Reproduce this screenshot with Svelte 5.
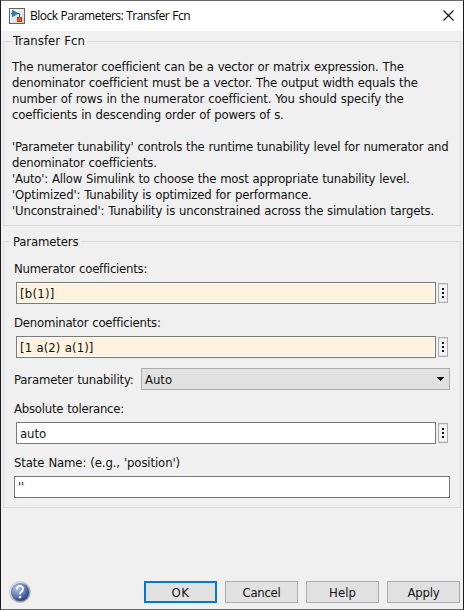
<script>
  // Spread a line of text evenly so that it spans the given width.
  function fit(node, width) {
    const natural = node.getBoundingClientRect().width;
    const count = [...node.textContent].length;
    node.style.letterSpacing = (width - natural) / count + 'px';
  }

  const description = [
    ['The numerator coefficient can be a vector or matrix expression. The', 391.5],
    ['denominator coefficient must be a vector. The output width equals the', 405.5],
    ['number of rows in the numerator coefficient. You should specify the', 391.5],
    ['coefficients in descending order of powers of s.', 271.5],
    ['', 0],
    ["'Parameter tunability' controls the runtime tunability level for numerator and", 436.5],
    ['denominator coefficients.', 144.5],
    ["'Auto': Allow Simulink to choose the most appropriate tunability level.", 397.5],
    ["'Optimized': Tunability is optimized for performance.", 299.5],
    ["'Unconstrained': Tunability is unconstrained across the simulation targets.", 422]
  ];

  const buttons = [
    ['OK', 18],
    ['Cancel', 38],
    ['Help', 27],
    ['Apply', 32]
  ];
</script>

{#snippet more()}
  <button class="more" aria-label="More options"><i></i><i></i><i></i></button>
{/snippet}

<div class="window">
  <header>
    <svg class="app" width="16" height="16" viewBox="0 0 16 16">
      <defs>
        <linearGradient id="tile" x1="0" y1="0" x2="1" y2="1">
          <stop offset="0" stop-color="#fff" /><stop offset="1" stop-color="#cfcfcf" />
        </linearGradient>
      </defs>
      <rect x=".5" y=".5" width="15" height="15" fill="url(#tile)" stroke="#626262" />
      <path d="M2 5.5h2M8 5.5h2.5v4" fill="none" stroke="#555" />
      <path d="M3.3 2.2v6.6L9 5.5z" fill="#2387bd" stroke="#17638f" stroke-width=".7" />
      <rect x="8.5" y="9.5" width="4" height="4" fill="#e9632b" stroke="#a93b12" />
    </svg>
    <span class="title"><span use:fit={160}>Block Parameters: Transfer Fcn</span></span>
    <svg class="close" width="11" height="11" viewBox="0 0 11 11">
      <path d="M.5.5l10 10M10.5.5l-10 10" stroke="#111" stroke-width="1.1" />
    </svg>
  </header>

  <main>
    <section class="about">
      <div class="legend"><span use:fit={72}>Transfer Fcn</span></div>
      <div class="text">
        {#each description as [line, width]}
          <div class="line">{#if line}<span use:fit={width}>{line}</span>{/if}</div>
        {/each}
      </div>
    </section>

    <section class="params">
      <div class="legend"><span use:fit={65.5}>Parameters</span></div>
      <div class="label"><span use:fit={133}>Numerator coefficients:</span></div>
      <div class="row">
        <div class="field tint"><span use:fit={34.5}>[b(1)]</span></div>
        {@render more()}
      </div>
      <div class="label"><span use:fit={146.5}>Denominator coefficients:</span></div>
      <div class="row">
        <div class="field tint"><span use:fit={73.5}>[1 a(2) a(1)]</span></div>
        {@render more()}
      </div>
      <div class="choice">
        <div class="name"><span use:fit={119.5}>Parameter tunability:</span></div>
        <div class="select">
          <span use:fit={27}>Auto</span>
          <svg width="7" height="4" viewBox="0 0 7 4" shape-rendering="crispEdges"><path d="M0 0h7v1H6v1H5v1H4v1H3V3H2V2H1V1H0z" /></svg>
        </div>
      </div>
      <div class="label"><span use:fit={110}>Absolute tolerance:</span></div>
      <div class="row">
        <div class="field"><span use:fit={26}>auto</span></div>
        {@render more()}
      </div>
      <div class="label"><span use:fit={166}>State Name: (e.g., 'position')</span></div>
      <div class="row full"><div class="field"><span use:fit={6}>''</span></div></div>
    </section>

    <footer>
      <svg class="help" width="22" height="22" viewBox="0 0 22 22">
        <defs>
          <radialGradient id="ball" cx=".35" cy=".3" r=".75">
            <stop offset="0" stop-color="#b3c3e3" /><stop offset=".5" stop-color="#6e88bf" /><stop offset="1" stop-color="#213c80" />
          </radialGradient>
          <linearGradient id="rim" x1="0" y1="0" x2="1" y2="1">
            <stop offset="0" stop-color="#f8f8f8" /><stop offset="1" stop-color="#777" />
          </linearGradient>
        </defs>
        <circle cx="11" cy="11" r="10.5" fill="url(#rim)" stroke="#bbb" stroke-width=".6" />
        <circle cx="11" cy="11" r="9.1" fill="url(#ball)" />
        <path d="M7.9 8.4C7.9 4 14.1 4.1 14.1 8c0 2.5-3.1 2.7-3.1 5.2" fill="none" stroke="#f4f6fb" stroke-width="2" />
        <circle cx="11" cy="16" r="1.3" fill="#f4f6fb" />
      </svg>
      <div class="actions">
        {#each buttons as [label, width], i}
          <button class="push" class:primary={i === 0}><span use:fit={width}>{label}</span></button>
        {/each}
      </div>
    </footer>
  </main>
</div>

<style>
  :global(body) { margin: 0; }
  * { box-sizing: border-box; }
  .window {
    width: 464px; height: 610px;
    display: flex; flex-direction: column;
    border: 1px solid; border-color: #69686a #1b1a1b #666 #1b1a20;
    background: #f0f0f0;
    font: 13px/16px 'DejaVu Sans Condensed', 'DejaVu Sans', sans-serif;
    font-stretch: condensed;
    word-spacing: .4px;
    color: #111;
    white-space: nowrap;
  }
  header {
    height: 30px; flex: none;
    display: flex; align-items: center;
    padding: 0 9px 0 8px;
    background: #fff;
  }
  .app { margin-top: -1px; }
  .title {
    flex: 1; margin-left: 5px;
    font: 12px/16px 'Open Sans', 'Noto Sans', sans-serif;
    color: #000;
  }
  .close { margin-top: -2px; }
  main { flex: 1; display: flex; flex-direction: column; padding: 10px 2px 0; }
  section { border: 1px solid #dcdcdc; flex: none; }
  .about { height: 185px; }
  .params { height: 267px; margin-top: 15px; padding-right: 10px; }
  .legend {
    width: fit-content; height: 16px;
    margin: -9px 0 0 7px; padding: 0 2px;
    background: #f0f0f0;
  }
  .params .legend { margin-top: -8px; }
  .text { margin: 10px 0 0 8px; }
  .line { height: 16px; }
  .label { height: 16px; margin: 11px 0 0 10px; }
  .row {
    display: flex; align-items: center; gap: 2px;
    height: 22px; margin: 5px 2px 0 12px;
  }
  .row.full { margin: 5px 0 0 10px; }
  .field {
    flex: 1; height: 22px;
    padding: 3px 3px 1px;
    border: 1px solid #7a7a7a;
    background: #fff;
  }
  .full .field { padding-top: 2px; }
  .tint { background: #fff3e0; box-shadow: inset 0 0 0 1px #fff; }
  .more {
    width: 10px; height: 20px; padding: 0;
    display: flex; flex-direction: column; align-items: center; justify-content: center; gap: 2px;
    border: 1px solid #adadad;
    background: #f4f4f4;
    box-shadow: inset 0 1px #e1e1e1, inset 0 -1px #e1e1e1;
  }
  .more i { width: 2px; height: 2px; background: #111; }
  .choice { display: flex; margin: 10px 0 0 10px; height: 22px; }
  .name { width: 127px; padding-top: 4px; }
  .select {
    flex: 1; display: flex; align-items: center; justify-content: space-between;
    padding: 0 5px 0 3px;
    border: 1px solid #adadad;
    background: #e1e1e1;
  }
  .select span { margin-top: 2px; }
  .select svg { margin-top: -1px; }
  footer {
    display: flex; align-items: center; justify-content: space-between;
    height: 22px; margin-top: 73px; padding: 0 1px 0 6px;
  }
  .actions { display: flex; gap: 8px; }
  .push {
    width: 73px; height: 22px; padding: 0;
    border: 1px solid #adadad;
    background: #e1e1e1;
    font: inherit; color: inherit; text-align: center;
  }
  .push span { position: relative; top: .5px; }
  .push.primary { border: 2px solid #0078d7; }
</style>
